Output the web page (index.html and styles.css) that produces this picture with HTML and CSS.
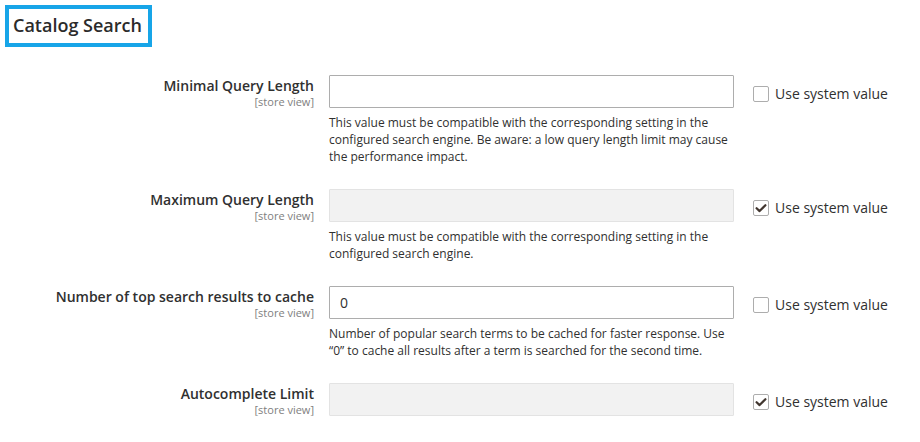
FILE: index.html
```html
<!DOCTYPE html>
<html>
<head>
<meta charset="utf-8">
<link rel="stylesheet" href="styles.css">
</head>
<body>
<div class="page">
  <div class="section-title">Catalog Search</div>
  <div class="rows">
    <div class="row">
      <div class="label"><span class="label-text">Minimal Query Length</span><span class="scope">[store view]</span></div>
      <div class="control">
        <input class="field" type="text" value="">
        <p class="note">This value must be compatible with the corresponding setting in the configured search engine. Be aware: a low query length limit may cause the performance impact.</p>
      </div>
      <label class="use-default"><span class="cb"></span><span>Use system value</span></label>
    </div>
    <div class="row">
      <div class="label"><span class="label-text">Maximum Query Length</span><span class="scope">[store view]</span></div>
      <div class="control">
        <input class="field" type="text" value="" disabled>
        <p class="note">This value must be compatible with the corresponding setting in the configured search engine.</p>
      </div>
      <label class="use-default"><span class="cb checked"><svg viewBox="0 0 16 16" width="16" height="16"><path d="M3.6 8.2 L6.6 11.1 L12.4 5.2" fill="none" stroke="#41362f" stroke-width="2.2" stroke-linecap="round" stroke-linejoin="round"/></svg></span><span>Use system value</span></label>
    </div>
    <div class="row">
      <div class="label"><span class="label-text">Number of top search results to cache</span><span class="scope">[store view]</span></div>
      <div class="control">
        <input class="field" type="text" value="0">
        <p class="note">Number of popular search terms to be cached for faster response. Use “0” to cache all results after a term is searched for the second time.</p>
      </div>
      <label class="use-default"><span class="cb"></span><span>Use system value</span></label>
    </div>
    <div class="row">
      <div class="label"><span class="label-text">Autocomplete Limit</span><span class="scope">[store view]</span></div>
      <div class="control">
        <input class="field" type="text" value="" disabled>
      </div>
      <label class="use-default"><span class="cb checked"><svg viewBox="0 0 16 16" width="16" height="16"><path d="M3.6 8.2 L6.6 11.1 L12.4 5.2" fill="none" stroke="#41362f" stroke-width="2.2" stroke-linecap="round" stroke-linejoin="round"/></svg></span><span>Use system value</span></label>
    </div>
  </div>
</div>
</body>
</html>
```

FILE: styles.css
```css
* { box-sizing: border-box; }
html, body { margin: 0; padding: 0; background: #ffffff; }
body {
  font-family: "Open Sans", "Noto Sans", "Liberation Sans", sans-serif;
  color: #303030;
  width: 920px;
  height: 442px;
  overflow: hidden;
}
.page { padding: 5px 0 0 5px; }
.section-title {
  display: inline-block;
  border: 4px solid #17a5e8;
  padding: 3px 6px 5px 4px;
  font-size: 18px;
  line-height: 26px;
  font-weight: 600;
  color: #2b2b2b;
}
.rows {
  display: flex;
  flex-direction: column;
  gap: 24px;
  margin-top: 28px;
  margin-left: -5px;
}
.row {
  display: grid;
  grid-template-columns: 314px 405px auto;
  column-gap: 15px;
  align-items: start;
}
.label {
  display: flex;
  flex-direction: column;
  align-items: flex-end;
  text-align: right;
  padding-top: 2px;
}
.label-text {
  font-size: 14px;
  line-height: 18px;
  font-weight: 600;
  color: #303030;
}
.scope {
  font-size: 11px;
  line-height: 13px;
  color: #808080;
}
.control { display: flex; flex-direction: column; }
.field {
  display: block;
  width: 405px;
  height: 33px;
  border: 1px solid #adadad;
  border-radius: 1px;
  background: #ffffff;
  padding: 0 10px;
  font-family: "Open Sans", "Noto Sans", sans-serif;
  font-size: 14px;
  color: #303030;
  outline: none;
}
.field:disabled {
  background: #f2f2f2;
  border-color: #e3e3e3;
}
.note {
  margin: 6px 0 0 0;
  font-size: 12px;
  line-height: 17px;
  color: #303030;
}
.use-default {
  display: flex;
  align-items: center;
  gap: 6px;
  margin-left: 4px;
  padding-top: 10px;
  font-size: 14px;
  line-height: 18px;
  color: #303030;
}
.cb {
  display: inline-flex;
  align-items: center;
  justify-content: center;
  width: 16px;
  height: 16px;
  border: 1px solid #adadad;
  border-radius: 2px;
  background: #ffffff;
}
.cb svg { display: block; margin: -1px; }
```
